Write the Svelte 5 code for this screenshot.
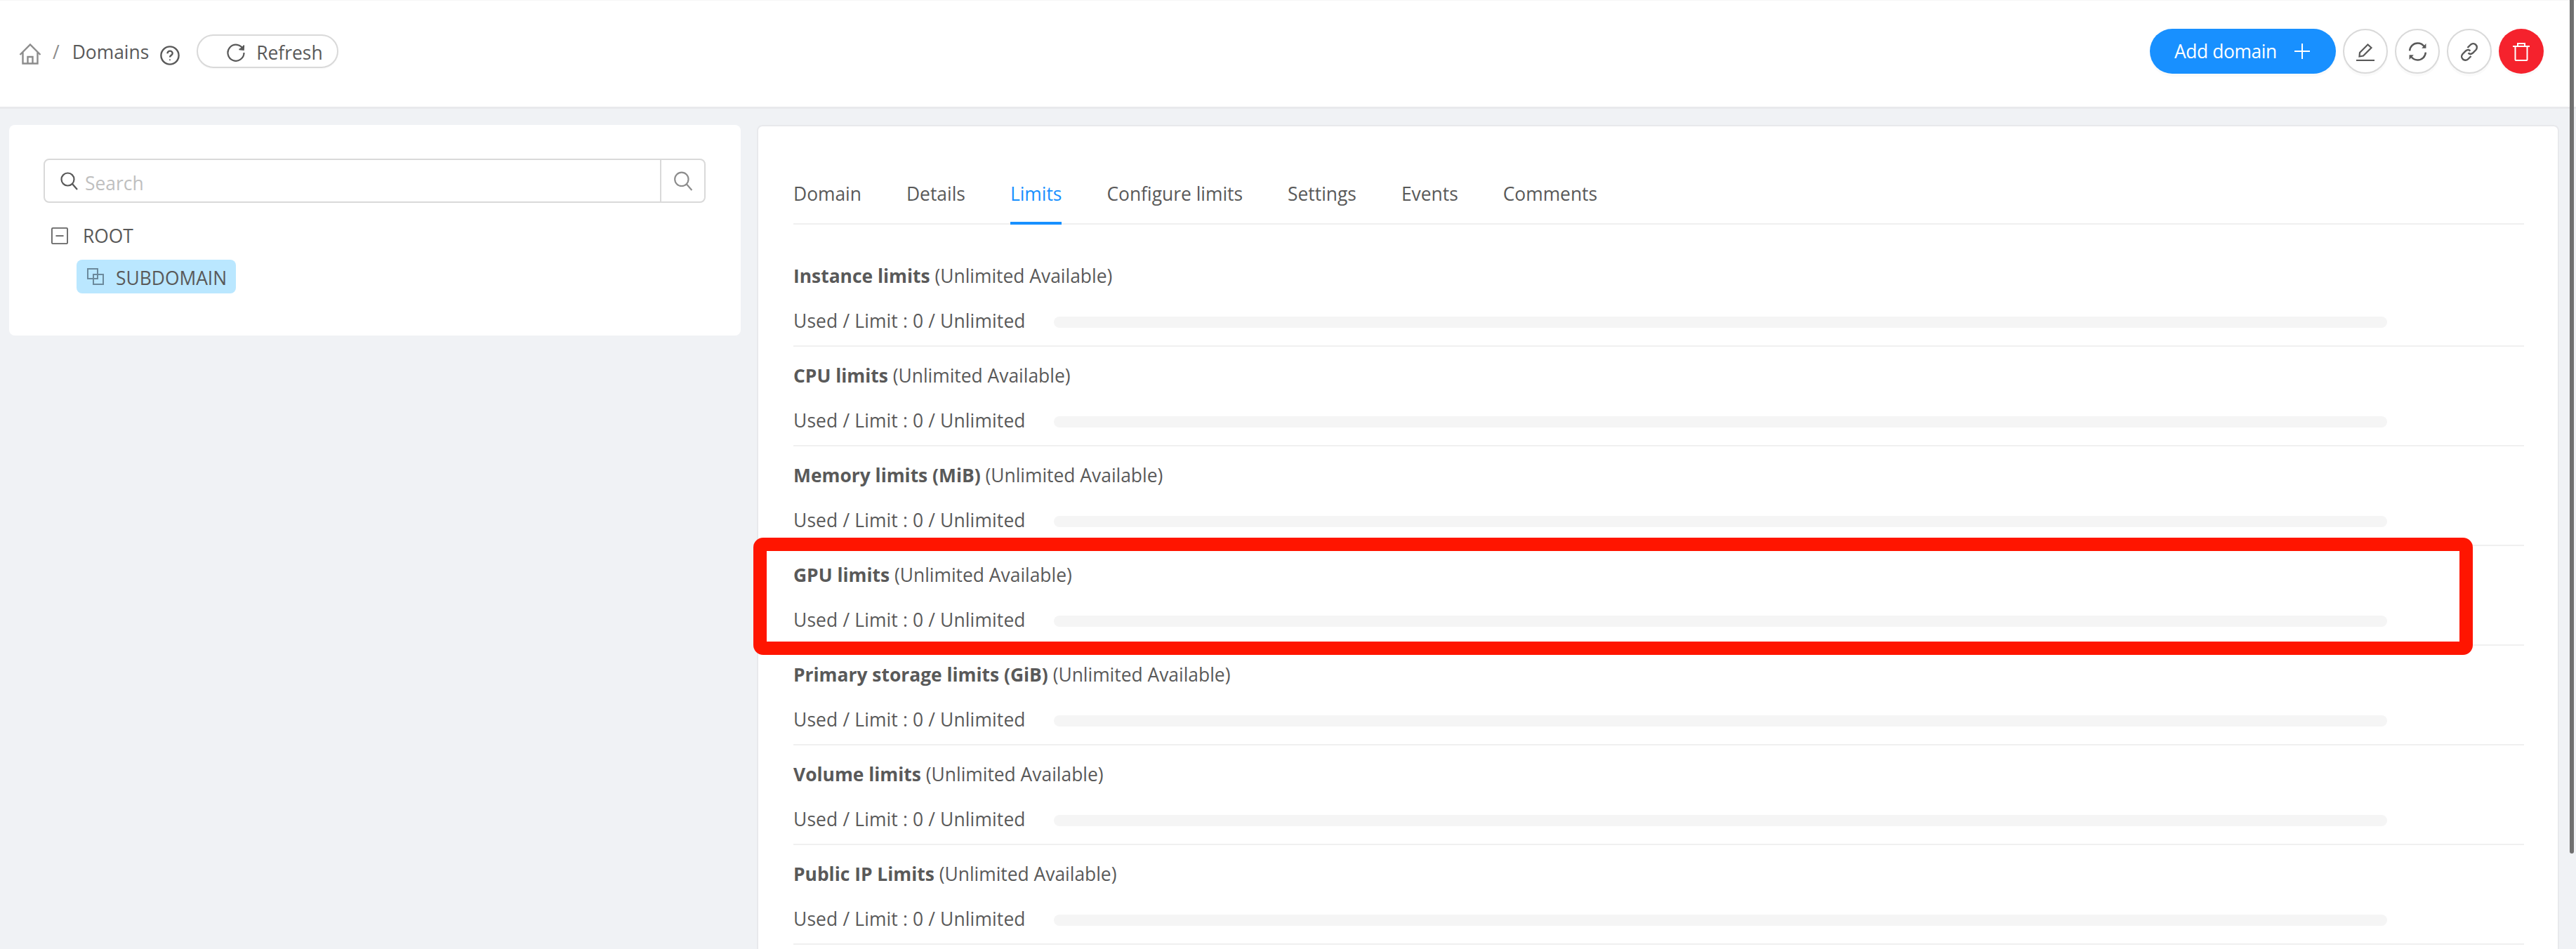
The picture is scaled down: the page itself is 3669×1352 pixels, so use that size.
<script>
  const tabs = ['Domain', 'Details', 'Limits', 'Configure limits', 'Settings', 'Events', 'Comments'];
  const limits = ['Instance limits', 'CPU limits', 'Memory limits (MiB)', 'GPU limits', 'Primary storage limits (GiB)', 'Volume limits', 'Public IP Limits'];
</script>

<div class="page">
  <header class="topbar">
    <div class="crumbs">
      <svg class="home" viewBox="0 0 32 30" fill="none" stroke="#8c8c8c" stroke-width="2.4"><path d="M1.5 16 16 1.5 30.500 16M5.500 12.500V28.500H26.500V12.500M12.500 28.500V19H19.500V28.500" /></svg>
      <span class="sep">/</span>
      <span class="crumb">Domains</span>
      <svg class="help" viewBox="0 0 28 28" fill="none" stroke="#595959" stroke-width="2.4"><circle cx="14" cy="14" r="12.600" /><path d="M10.500 11.200c0-2.200 1.600-3.600 3.600-3.600s3.600 1.400 3.600 3.300c0 2.900-3.700 2.900-3.700 5.700" /><circle cx="14" cy="20.300" r="1" fill="#595959" stroke="none" /></svg>
      <button class="refresh">
        <svg viewBox="0 0 26 26" fill="none" stroke="#595959" stroke-width="2.200"><path d="M23.500 8.500A11.500 11.500 0 1 0 24.500 13" /><path d="M24.200 2.500 23.800 9 17.500 8.300" stroke-width="2" fill="#595959" /></svg>
        Refresh
      </button>
    </div>
    <div class="actions">
      <button class="primary"><span>Add domain</span>
        <svg viewBox="0 0 22 22" stroke="#fff" stroke-width="2"><path d="M11 0V22M0 11H22" /></svg>
      </button>
      <button class="circle" aria-label="edit">
        <svg viewBox="0 0 26 26" fill="none" stroke="#595959" stroke-width="2.200"><path d="M0 25H26" /><path d="M4.500 19.500 5 14 16.500 2.500 21.500 7 10 18.500Z" /></svg>
      </button>
      <button class="circle" aria-label="sync">
        <svg class="sync" viewBox="0 0 28 28" fill="none" stroke="#595959" stroke-width="2.400"><path d="M3 13C3.500 7 8 2.500 14 2.500c3.800 0 7 1.800 9 4.600" /><path d="M25 15c-.5 6-5 10.500-11 10.500-3.800 0-7-1.800-9-4.600" /><path d="M25.500 3v6.500H19.500Z" fill="#595959" stroke="none" /><path d="M2.500 25v-6.500H8.500Z" fill="#595959" stroke="none" /></svg>
      </button>
      <button class="circle" aria-label="link">
        <svg viewBox="0 0 26 26" fill="none" stroke="#595959" stroke-width="2.400"><path d="M10.500 7 14.500 3a5 5 0 0 1 8 7l-4.500 4.500a5 5 0 0 1-6.500 0" /><path d="M15.500 19 11.500 23a5 5 0 0 1-8-7L8 11.500a5 5 0 0 1 6.500 0" /></svg>
      </button>
      <button class="circle danger" aria-label="delete">
        <svg viewBox="0 0 24 26" fill="none" stroke="#fff" stroke-width="2"><path d="M0 5H24" /><path d="M7 5V1H17V5" /><path d="M3.500 5V24a1 1 0 0 0 1 1H19.500a1 1 0 0 0 1-1V5" /></svg>
      </button>
    </div>
  </header>

  <main class="content">
    <aside class="side card">
      <div class="search">
        <div class="field">
          <svg viewBox="0 0 25 26" fill="none" stroke="#595959" stroke-width="2.200"><circle cx="10.500" cy="10.500" r="9" /><path d="M17 17 24 25" /></svg>
          <span class="ph">Search</span>
        </div>
        <div class="go">
          <svg viewBox="0 0 25 26" fill="none" stroke="#8c8c8c" stroke-width="2"><circle cx="10.500" cy="10.500" r="9" /><path d="M17 17 24 25" /></svg>
        </div>
      </div>
      <div class="tree-root">
        <svg viewBox="0 0 26 26" fill="none" stroke="#666" stroke-width="2"><rect x="1" y="1" width="24" height="24" rx="1.500" /><path d="M7 13H19" /></svg>
        <span>ROOT</span>
      </div>
      <div class="tree-child">
        <svg viewBox="0 0 24 24" fill="none" stroke="#6c8a9c" stroke-width="2"><rect x="1" y="1" width="14" height="14" /><rect x="9" y="9" width="14" height="14" /></svg>
        <span>SUBDOMAIN</span>
      </div>
    </aside>

    <section class="detail card">
      <nav class="tabs">
        {#each tabs as t}
          <span class="tab" class:active={t === 'Limits'}>{t}</span>
        {/each}
      </nav>
      <div class="rows">
        {#each limits as l}
          <div class="row">
            <div class="title"><strong>{l}</strong> (Unlimited Available)</div>
            <div class="usage">
              <span>Used / Limit : 0 / Unlimited</span>
              <div class="bar"></div>
            </div>
          </div>
        {/each}
      </div>
    </section>
  </main>

  <div class="highlight"></div>
  <div class="scrollbar"></div>
</div>

<style>
  :global(body) { margin: 0; background: #f0f2f5; }
  .page {
    position: relative;
    width: 3669px;
    height: 1352px;
    overflow: hidden;
    background: #f0f2f5;
    font-family: "Open Sans", "Noto Sans", sans-serif;
    font-size: 26.4px;
    color: #595959;
  }
  button { font: inherit; color: inherit; background: #fff; padding: 0; cursor: pointer; }
  svg { display: block; flex: none; }

  .topbar {
    height: 151px;
    background: #fff;
    border-top: 1px solid #f7f7f7;
    border-bottom: 3px solid #e8e9ec;
    display: flex;
    align-items: center;
    justify-content: space-between;
    padding: 0 46px 0 27px;
  }
  .crumbs { display: flex; align-items: center; }
  .home { width: 32px; height: 30px; }
  .sep { margin: 0 0 6px 16px; color: #8c8c8c; }
  .crumb { margin: 0 0 6px 18px; }
  .help { width: 28px; height: 28px; margin-left: 16px; margin-top: 4px; }
  .refresh {
    margin-left: 24px;
    margin-top: -8px;
    width: 202px;
    height: 48px;
    border: 2px solid #d9d9d9;
    border-radius: 24px;
    display: flex;
    align-items: center;
    justify-content: flex-start;
    padding: 4px 0 0 41px;
    gap: 16px;
    box-shadow: 0 2px 0 rgba(0, 0, 0, 0.015);
    box-sizing: border-box;
  }
  .refresh svg { width: 26px; height: 26px; }

  .actions { display: flex; align-items: center; gap: 10px; margin-top: -8px; }
  .primary {
    width: 265px;
    height: 64px;
    border: none;
    border-radius: 32px;
    background: #1890ff;
    color: #fff;
    display: flex;
    align-items: center;
    justify-content: flex-start;
    padding-left: 35px;
    gap: 20px;
    box-shadow: 0 4px 0 rgba(0, 0, 0, 0.02);
  }
  .primary span { width: 151px; white-space: nowrap; letter-spacing: -0.4px; text-align: left; }
  .primary svg { width: 22px; height: 22px; }
  .circle {
    width: 64px;
    height: 64px;
    border-radius: 50%;
    border: 2px solid #d9d9d9;
    box-sizing: border-box;
    display: flex;
    align-items: center;
    justify-content: center;
    padding-top: 2px;
    box-shadow: 0 4px 0 rgba(0, 0, 0, 0.02);
  }
  .circle svg { width: 26px; height: 26px; }
  .circle svg.sync { width: 29px; height: 29px; }
  .danger { background: #f5222d; border: none; }

  .content {
    display: flex;
    align-items: flex-start;
    padding: 23px 24px 0 13px;
    gap: 23px;
  }
  .card { background: #fff; border-radius: 8px; box-sizing: border-box; }
  .side {
    width: 1042px;
    height: 300px;
    padding: 48px 50px 0 49px;
    flex: none;
  }
  .search {
    height: 63px;
    display: flex;
    border: 2px solid #d9d9d9;
    border-radius: 8px;
    box-sizing: border-box;
  }
  .field {
    flex: 1;
    display: flex;
    align-items: center;
    padding-left: 22px;
    gap: 10px;
    border-right: 2px solid #d9d9d9;
  }
  .field svg { width: 25px; height: 26px; }
  .go { width: 61px; display: flex; justify-content: center; align-items: center; }
  .go svg { width: 28px; height: 28px; }
  .ph { color: #bfbfbf; padding-top: 6px; }
  .tree-root {
    display: flex;
    align-items: center;
    gap: 21px;
    margin: 27px 0 0 11px;
    height: 40px;
  }
  .tree-root svg { width: 24px; height: 26px; }
  .tree-child {
    display: flex;
    align-items: center;
    gap: 17px;
    width: 227px;
    height: 48px;
    box-sizing: border-box;
    margin: 14px 0 0 47px;
    padding-left: 15px;
    background: #bae7ff;
    border-radius: 8px;
  }
  .tree-child span { padding-top: 3px; }
  .tree-child svg { width: 24px; height: 24px; }

  .detail {
    flex: 1;
    height: 1300px;
    padding: 0 48px 0 50px;
    border: 2px solid #e8e9ec;
  }
  .tabs {
    display: flex;
    gap: 64px;
    height: 138px;
    border-bottom: 2px solid #f0f0f0;
    align-items: flex-end;
  }
  .tab {
    height: 64px;
    line-height: 44px;
    position: relative;
  }
  .tab.active { color: #1890ff; }
  .tab.active::after {
    content: "";
    position: absolute;
    left: 0;
    right: 0;
    bottom: -2px;
    height: 4px;
    background: #1890ff;
  }
  .rows { margin-top: 32px; }
  .row {
    height: 142px;
    box-sizing: border-box;
    border-bottom: 2px solid #f0f0f0;
    padding-top: 21px;
  }
  .title { line-height: 40px; }
  .title strong { font-weight: 700; }
  .usage {
    display: flex;
    align-items: center;
    margin-top: 24px;
    height: 40px;
  }
  .usage span { width: 371px; flex: none; letter-spacing: 0.15px; }
  .bar {
    width: 1899px;
    height: 16px;
    border-radius: 8px;
    background: #f5f5f5;
    margin-top: 4px;
  }

  .highlight {
    position: absolute;
    left: 1073px;
    top: 766px;
    width: 2449px;
    height: 167px;
    box-sizing: border-box;
    border: 19px solid #ff1500;
    border-radius: 14px;
  }
  .scrollbar {
    position: absolute;
    left: 3660px;
    top: 0;
    width: 6px;
    height: 1216px;
    background: #707070;
    border-radius: 0 0 3px 3px;
  }
</style>
